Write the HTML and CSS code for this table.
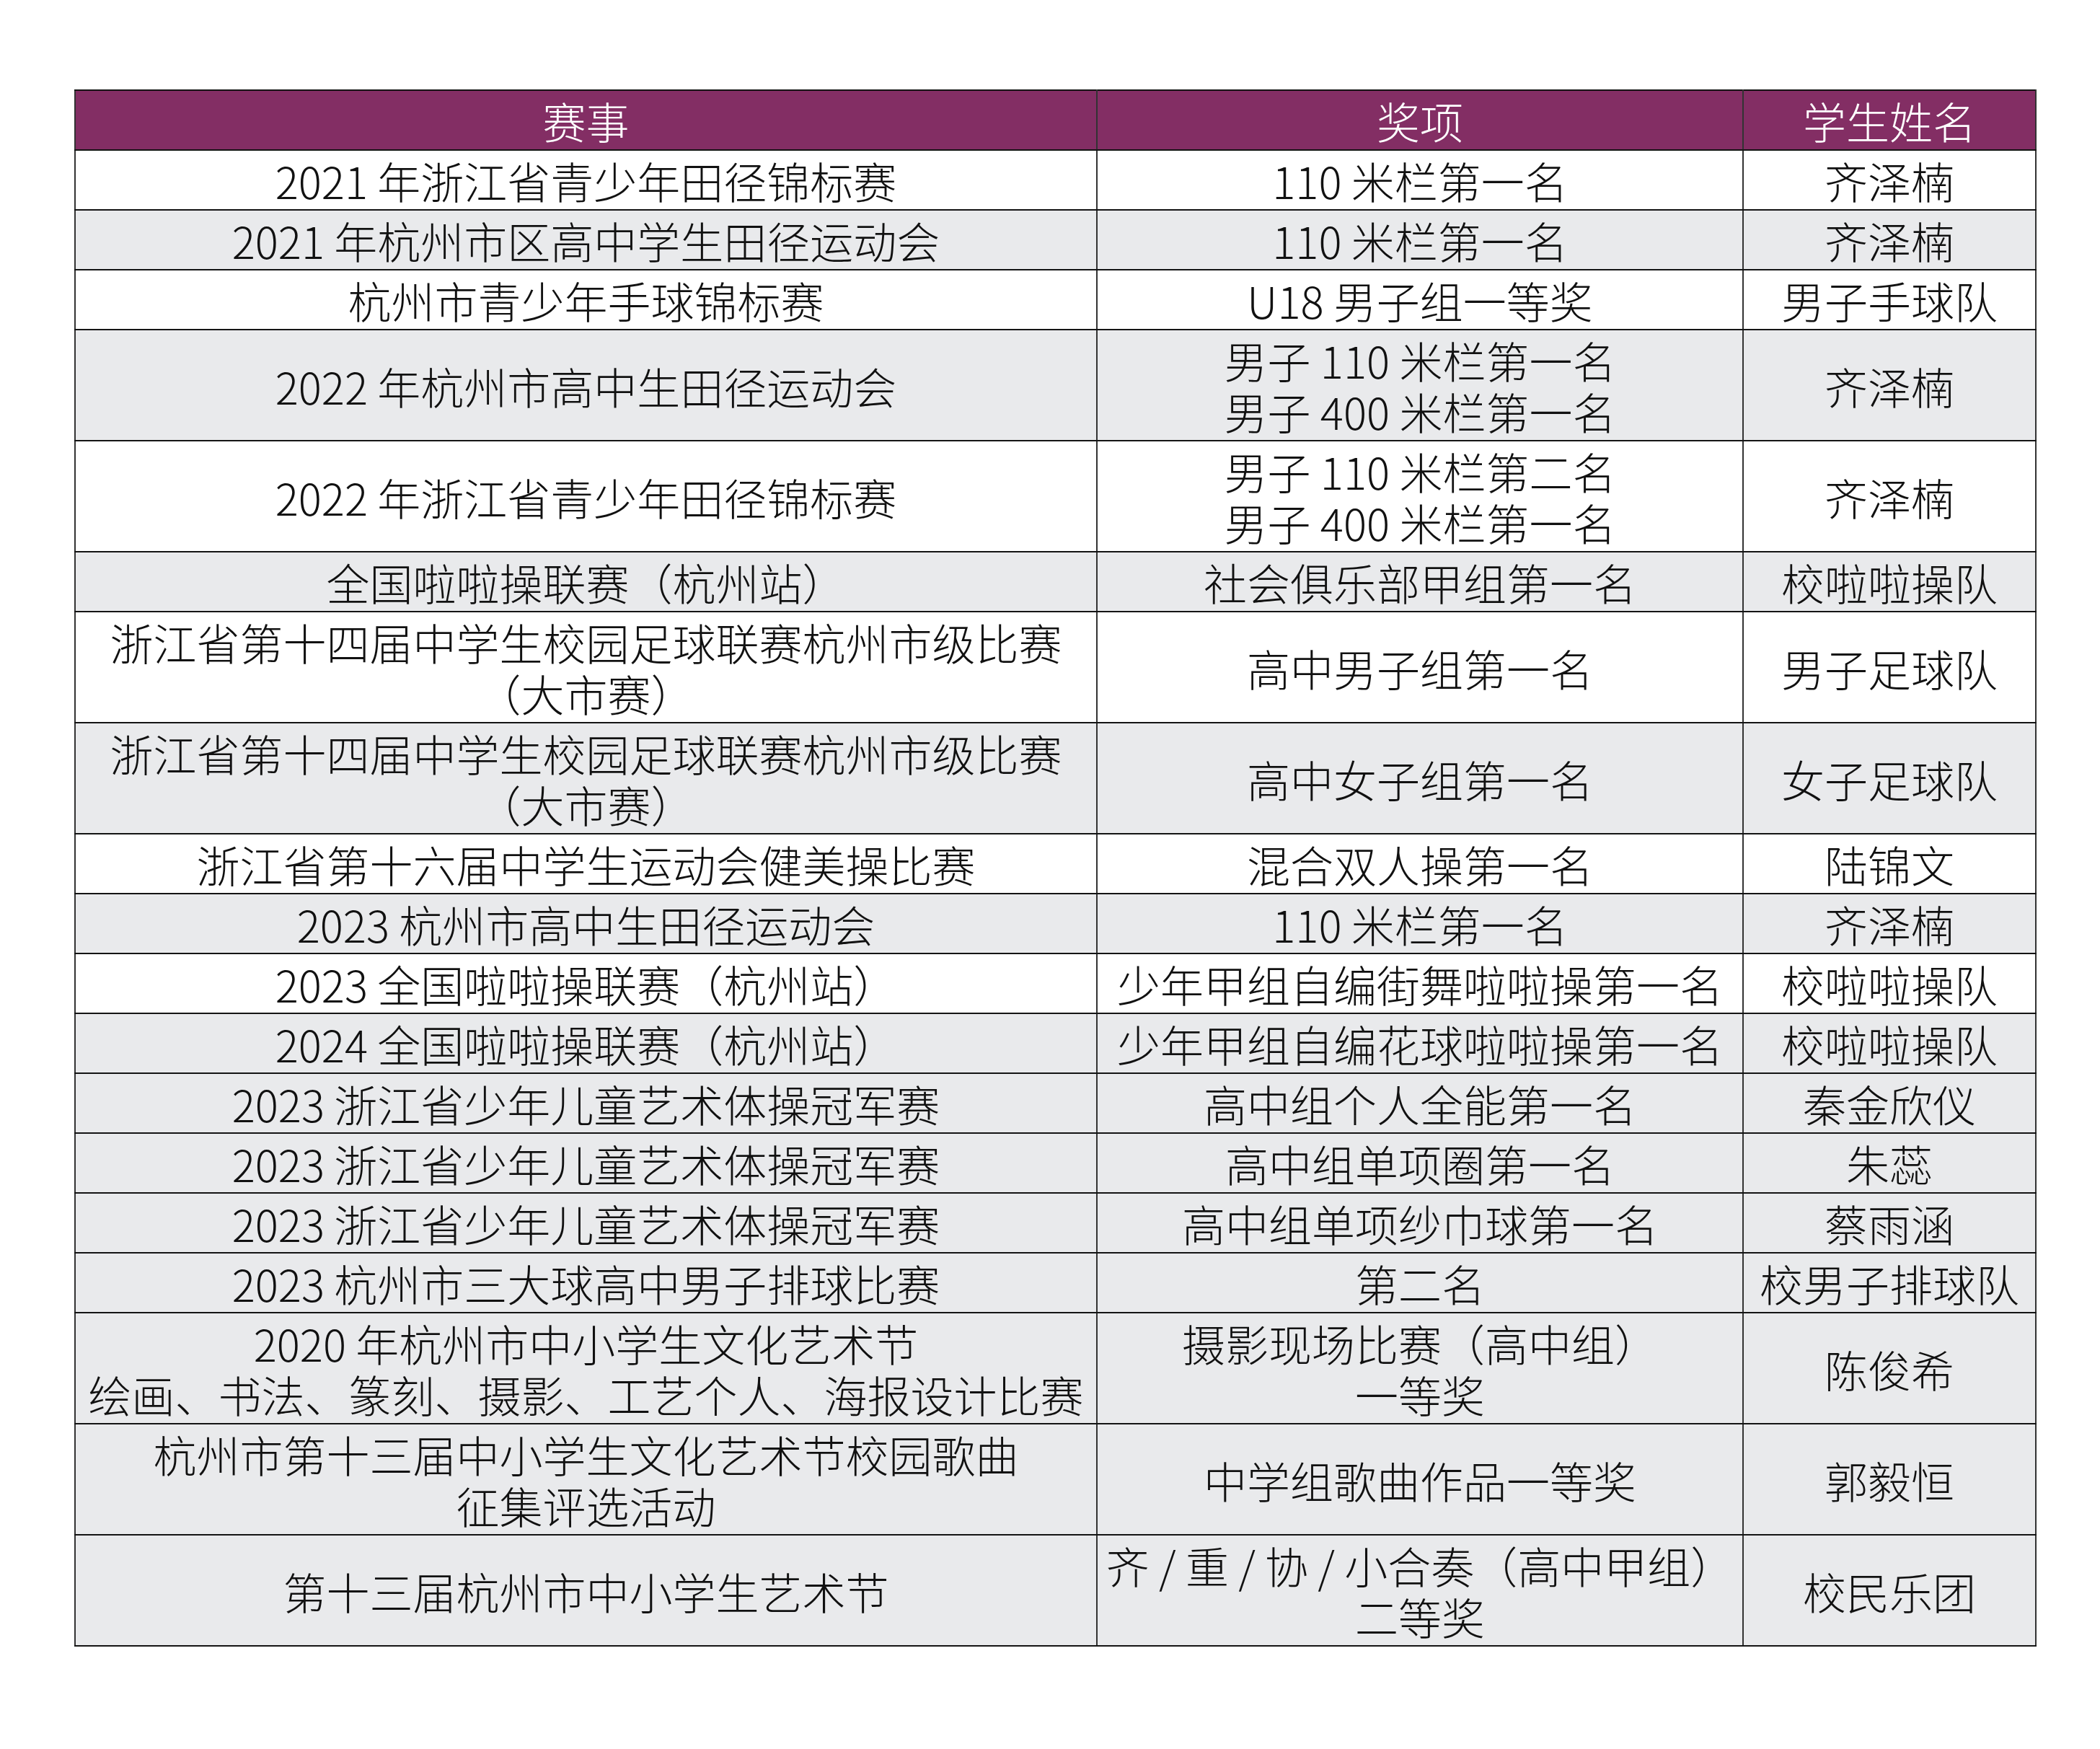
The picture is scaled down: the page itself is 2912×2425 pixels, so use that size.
FILE: index.html
```html
<!DOCTYPE html>
<html lang="zh-CN">
<head>
<meta charset="utf-8">
<title>获奖名单</title>
<link rel="stylesheet" href="styles.css">
</head>
<body>
<table class="awards">
  <colgroup>
    <col class="c-event">
    <col class="c-award">
    <col class="c-name">
  </colgroup>
  <thead>
    <tr class="head">
      <th>赛事</th><th>奖项</th><th>学生姓名</th>
    </tr>
  </thead>
  <tbody>
    <tr class="w"><td>2021 年浙江省青少年田径锦标赛</td><td>110 米栏第一名</td><td>齐泽楠</td></tr>
    <tr class="g"><td>2021 年杭州市区高中学生田径运动会</td><td>110 米栏第一名</td><td>齐泽楠</td></tr>
    <tr class="w"><td>杭州市青少年手球锦标赛</td><td>U18 男子组一等奖</td><td>男子手球队</td></tr>
    <tr class="g"><td>2022 年杭州市高中生田径运动会</td><td>男子 110 米栏第一名<br>男子 400 米栏第一名</td><td>齐泽楠</td></tr>
    <tr class="w"><td>2022 年浙江省青少年田径锦标赛</td><td>男子 110 米栏第二名<br>男子 400 米栏第一名</td><td>齐泽楠</td></tr>
    <tr class="g"><td>全国啦啦操联赛（杭州站）</td><td>社会俱乐部甲组第一名</td><td>校啦啦操队</td></tr>
    <tr class="w"><td>浙江省第十四届中学生校园足球联赛杭州市级比赛<br>（大市赛）</td><td>高中男子组第一名</td><td>男子足球队</td></tr>
    <tr class="g"><td>浙江省第十四届中学生校园足球联赛杭州市级比赛<br>（大市赛）</td><td>高中女子组第一名</td><td>女子足球队</td></tr>
    <tr class="w"><td>浙江省第十六届中学生运动会健美操比赛</td><td>混合双人操第一名</td><td>陆锦文</td></tr>
    <tr class="g"><td>2023 杭州市高中生田径运动会</td><td>110 米栏第一名</td><td>齐泽楠</td></tr>
    <tr class="w"><td>2023 全国啦啦操联赛（杭州站）</td><td>少年甲组自编街舞啦啦操第一名</td><td>校啦啦操队</td></tr>
    <tr class="g"><td>2024 全国啦啦操联赛（杭州站）</td><td>少年甲组自编花球啦啦操第一名</td><td>校啦啦操队</td></tr>
    <tr class="g"><td>2023 浙江省少年儿童艺术体操冠军赛</td><td>高中组个人全能第一名</td><td>秦金欣仪</td></tr>
    <tr class="g"><td>2023 浙江省少年儿童艺术体操冠军赛</td><td>高中组单项圈第一名</td><td>朱蕊</td></tr>
    <tr class="g"><td>2023 浙江省少年儿童艺术体操冠军赛</td><td>高中组单项纱巾球第一名</td><td>蔡雨涵</td></tr>
    <tr class="g"><td>2023 杭州市三大球高中男子排球比赛</td><td>第二名</td><td>校男子排球队</td></tr>
    <tr class="g"><td>2020 年杭州市中小学生文化艺术节<br>绘画、书法、篆刻、摄影、工艺个人、海报设计比赛</td><td>摄影现场比赛（高中组）<br>一等奖</td><td>陈俊希</td></tr>
    <tr class="g"><td>杭州市第十三届中小学生文化艺术节校园歌曲<br>征集评选活动</td><td>中学组歌曲作品一等奖</td><td>郭毅恒</td></tr>
    <tr class="g"><td>第十三届杭州市中小学生艺术节</td><td>齐 / 重 / 协 / 小合奏（高中甲组）<br>二等奖</td><td>校民乐团</td></tr>
  </tbody>
</table>
</body>
</html>
```

FILE: styles.css
```css
html, body {
  margin: 0;
  padding: 0;
  background: #ffffff;
}

body {
  padding: 124px 0 0 103px;
  font-family: "Noto Sans CJK SC Light", "Noto Sans CJK SC DemiLight", "Noto Sans CJK SC", "Noto Sans", sans-serif;
  font-weight: 300;
  color: #111111;
}

.awards {
  border-collapse: collapse;
  table-layout: fixed;
  width: 2719px;
  font-size: 60px;
  line-height: 71px;
}

.c-event { width: 1417px; }
.c-award { width: 896px; }
.c-name  { width: 406px; }

.awards th,
.awards td {
  padding: 5px 0;
  text-align: center;
  vertical-align: middle;
  white-space: nowrap;
  border-top: 2px solid #141414;
  border-bottom: 2px solid #141414;
  border-left: 2px solid #333333;
  border-right: 2px solid #333333;
}

.awards th {
  font-weight: 300;
  color: #ffffff;
  background: #832e64;
}

.awards tr.w td { background: #ffffff; }
.awards tr.g td { background: #e9eaec; }
```
